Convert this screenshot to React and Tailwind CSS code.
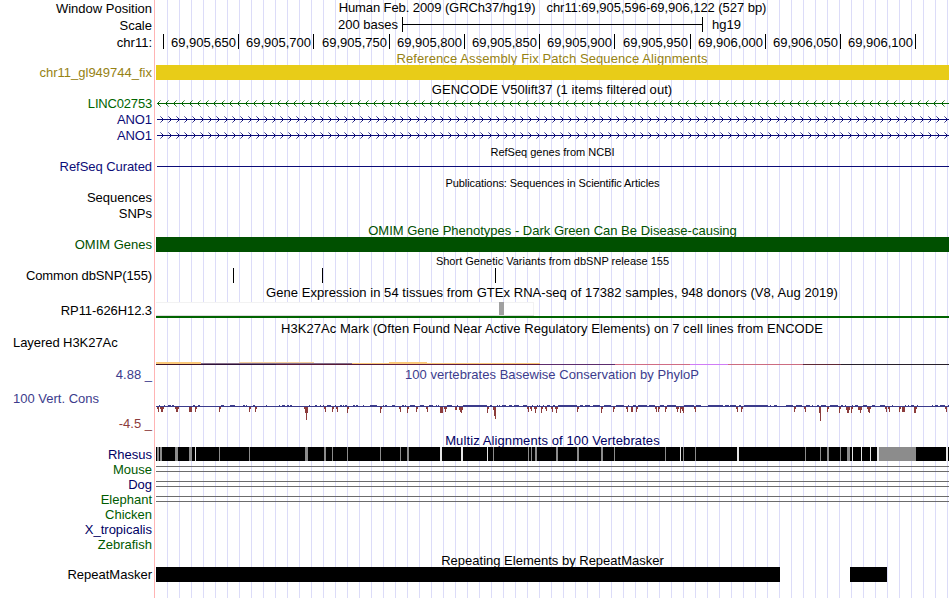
import React from 'react';

// Tracks share one x scale: window pixels 156 to 949
const LEFT = 156;
const WIDTH = 793;

const rulerTicks = [
  { label: '69,905,650', wide: false },
  { label: '69,905,700', wide: false },
  { label: '69,905,750', wide: true },
  { label: '69,905,800', wide: false },
  { label: '69,905,850', wide: false },
  { label: '69,905,900', wide: false },
  { label: '69,905,950', wide: true },
  { label: '69,906,000', wide: false },
  { label: '69,906,050', wide: false },
  { label: '69,906,100', wide: false },
];

// [x, width, height]
const consDrops = [
  [157, 2, 2], [158, 1, 5], [160, 4, 2], [161, 2, 5], [175, 4, 2], [176, 2, 5], [189, 3, 5], [195, 2, 2], [195, 1, 5],
  [219, 2, 2], [219, 1, 5], [249, 2, 2], [249, 1, 5], [255, 2, 2], [255, 1, 5], [304, 4, 2], [305, 3, 6], [306, 1, 13],
  [324, 2, 2], [325, 1, 5], [332, 2, 2], [332, 1, 5], [336, 2, 2], [337, 1, 5], [347, 2, 2], [347, 1, 6], [380, 2, 2],
  [380, 1, 6], [399, 2, 2], [400, 1, 5], [407, 2, 2], [407, 1, 6], [416, 2, 2], [416, 1, 5], [426, 2, 2], [427, 1, 5],
  [440, 3, 6], [444, 3, 2], [445, 1, 5], [455, 2, 3], [459, 4, 3], [461, 1, 6], [460, 2, 5], [487, 2, 2], [487, 1, 6],
  [493, 3, 3], [494, 2, 9], [495, 1, 12], [527, 2, 2], [528, 1, 5], [530, 2, 2], [531, 1, 4], [534, 3, 2], [535, 1, 6],
  [541, 2, 2], [541, 1, 6], [545, 2, 2], [546, 1, 4], [551, 2, 2], [552, 1, 5], [555, 3, 2], [556, 1, 6], [577, 2, 2],
  [577, 1, 5], [601, 2, 2], [601, 1, 6], [613, 2, 2], [613, 1, 5], [626, 2, 2], [627, 1, 5], [631, 2, 5], [636, 2, 2],
  [636, 1, 5], [655, 2, 2], [656, 1, 5], [658, 2, 2], [658, 1, 5], [665, 2, 2], [665, 1, 5], [676, 3, 2], [677, 1, 5],
  [680, 2, 2], [680, 1, 6], [682, 1, 4], [683, 1, 6], [694, 2, 2], [695, 1, 5], [736, 2, 2], [737, 1, 5], [741, 2, 2],
  [741, 1, 5], [794, 2, 2], [794, 1, 5], [804, 2, 2], [805, 1, 5], [819, 2, 6], [820, 1, 14], [827, 2, 2], [827, 1, 5],
  [839, 2, 2], [839, 1, 6], [846, 4, 3], [847, 2, 6], [851, 2, 2], [851, 1, 6], [858, 4, 3], [860, 1, 6], [867, 4, 2],
  [868, 2, 5], [869, 1, 6], [885, 2, 2], [886, 1, 5], [888, 2, 2], [889, 1, 5], [899, 2, 2], [899, 1, 5], [902, 3, 5],
  [914, 3, 2], [914, 2, 6], [945, 2, 2], [946, 1, 5],
];

// [x, width]
const consBumps = [
  [159, 1], [164, 1], [168, 3], [172, 2], [193, 2], [198, 2], [221, 3], [230, 5], [243, 2], [246, 1], [253, 2], [266, 1],
  [279, 1], [282, 3], [287, 2], [290, 2], [309, 1], [315, 2], [320, 1], [323, 1], [327, 4], [335, 1], [340, 2], [343, 1],
  [345, 2], [353, 2], [356, 2], [363, 1], [370, 7], [383, 1], [385, 2], [392, 3], [402, 2], [405, 1], [410, 5], [420, 4],
  [429, 4], [436, 1], [438, 1], [447, 5], [457, 1], [463, 24], [490, 2], [497, 1], [499, 1], [502, 4], [509, 3], [514, 5],
  [523, 4], [532, 1], [537, 1], [539, 1], [543, 1], [547, 3], [553, 2], [558, 19], [580, 3], [585, 5], [593, 7], [604, 7],
  [616, 8], [628, 1], [633, 3], [638, 9], [649, 6], [660, 4], [667, 9], [684, 6], [690, 4], [696, 5], [708, 15], [725, 4],
  [730, 6], [739, 2], [744, 24], [770, 1], [774, 3], [786, 7], [796, 6], [806, 4], [812, 1], [817, 2], [821, 5], [830, 8],
  [841, 2], [845, 1], [852, 1], [855, 3], [863, 4], [872, 3], [880, 5], [892, 1], [905, 1], [908, 1], [911, 3], [917, 1],
  [932, 1], [935, 3], [940, 5], [948, 1],
];

const rhesusGray = [
  [157, 2], [160, 2], [175, 3], [189, 3], [219, 1], [249, 1], [305, 3], [324, 2], [332, 1], [347, 1], [380, 1], [400, 1],
  [407, 2], [493, 1], [528, 1], [531, 1], [535, 2], [556, 2], [577, 2], [601, 2], [614, 1], [665, 1], [683, 1], [695, 1],
  [805, 1], [820, 1], [827, 2], [840, 1], [847, 3], [879, 37],
];

const rhesusLight = [[195, 1], [440, 2], [461, 2], [487, 1], [680, 1], [737, 2], [852, 1], [861, 1], [870, 1], [877, 2], [946, 2]];

// [x, y, width, height, color]
const h3k27ac = [
  [156, 27, 45, 2, '#fac878'],
  [201, 28, 151, 1, '#86708a'],
  [239, 27, 75, 1, '#f4cf9c'],
  [352, 28, 37, 1, '#fac878'],
  [389, 27, 38, 2, '#fac878'],
  [427, 28, 113, 1, '#fac878'],
  [156, 29, 45, 1, '#3c1022'],
  [201, 29, 75, 1, '#2e1038'],
  [276, 29, 113, 1, '#561838'],
  [389, 29, 151, 1, '#601a3c'],
  [540, 29, 75, 1, '#5c2c6c'],
  [615, 29, 75, 1, '#d06c84'],
  [690, 29, 38, 1, '#d07cf6'],
  [728, 29, 75, 1, '#cc6c80'],
  [803, 29, 38, 1, '#602834'],
  [841, 29, 108, 1, '#28202a'],
];

const Plot = ({ height, children }) => (
  <svg
    className="block"
    width={WIDTH}
    height={height}
    viewBox={`${LEFT} 0 ${WIDTH} ${height}`}
    shapeRendering="crispEdges"
  >
    {children}
  </svg>
);

const Row = ({ height, label, labelClass = '', children }) => (
  <div className={`flex ${height}`}>
    <div className={`w-[152px] shrink-0 text-right ${labelClass}`}>{label}</div>
    <div className="ml-1 w-[793px] shrink-0">{children}</div>
  </div>
);

const Title = ({ className = '', children }) => (
  <div className={`text-center ${className}`}>{children}</div>
);

const GeneLine = ({ color, strand }) => {
  const tips = [];
  for (let x = strand === '-' ? 157 : 163; x < 949; x += 8) tips.push(x);
  const dir = strand === '-' ? 1 : -1;
  return (
    <Plot height={16}>
      <rect x={157} y={7} width={792} height={1} fill={color} />
      {tips.map((x) => (
        <g key={x} fill={color}>
          <rect x={x + dir} y={6} width={1} height={3} />
          <rect x={x + dir * 2} y={5} width={1} height={1} opacity={0.8} />
          <rect x={x + dir * 2} y={9} width={1} height={1} opacity={0.8} />
          <rect x={x + dir * 3} y={4} width={1} height={1} opacity={0.5} />
          <rect x={x + dir * 3} y={10} width={1} height={1} opacity={0.5} />
        </g>
      ))}
    </Plot>
  );
};

const AlignRow = ({ name, labelClass, lines }) => (
  <Row height="h-[15px]" label={name} labelClass={labelClass}>
    {lines && (
      <Plot height={15}>
        <rect x={156} y={4} width={793} height={1} fill="#6c6c6c" />
        <rect x={156} y={9} width={793} height={1} fill="#6c6c6c" />
      </Plot>
    )}
  </Row>
);

export default function App() {
  return (
    <div className="flex h-[598px] w-[950px] overflow-hidden bg-white font-['Liberation_Sans',Arial,sans-serif] text-[13px] leading-[15px] whitespace-nowrap text-black">
      <div className="h-[598px] w-[949px] bg-[linear-gradient(90deg,#fff_154px,#ffb4b4_154px,#ffb4b4_155px,#fff_155px,#fff_156px,transparent_156px),repeating-linear-gradient(90deg,#dcdcf8_0px,#dcdcf8_1px,#fff_1px,#fff_12px)] bg-[position:0_0,11px_0]">
        <Row height="h-[17px]" label="Window Position" labelClass="pt-px">
          <div className="flex justify-center gap-[11px]">
            <span className="tracking-[-0.09px]">Human Feb. 2009 (GRCh37/hg19)</span>
            <span className="tracking-[-0.05px]">chr11:69,905,596-69,906,122 (527 bp)</span>
          </div>
        </Row>
        <Row height="h-[17px]" label="Scale" labelClass="pt-px">
          <div className="flex">
            <span className="w-[242px] text-right">200 bases</span>
            <span className="ml-1 flex h-[15px] w-[301px] items-center border-x border-black">
              <span className="h-px w-full bg-black" />
            </span>
            <span className="ml-[9px]">hg19</span>
          </div>
        </Row>
        <Row height="h-4" label="chr11:" labelClass="pt-px">
          <div className="flex">
            <span className="h-[15px] w-2 border-r border-black" />
            {rulerTicks.map((t) => (
              <span
                key={t.label}
                className={`h-[15px] border-r border-black pt-px pr-0.5 text-right ${t.wide ? 'w-[76px]' : 'w-[75px]'}`}
              >
                {t.label}
              </span>
            ))}
          </div>
        </Row>

        <Row height="h-[15px]">
          <Title className="pt-px pr-px tracking-[0.1px] text-[#968214]">Reference Assembly Fix Patch Sequence Alignments</Title>
        </Row>
        <Row height="h-4" label="chr11_gl949744_fix" labelClass="text-[#968214]">
          <div className="relative h-[15px] bg-[#e8cc18]" />
        </Row>

        <Row height="h-[15px]">
          <Title className="pt-px pr-px tracking-[0.05px]">GENCODE V50lift37 (1 items filtered out)</Title>
        </Row>
        <Row height="h-4" label="LINC02753" labelClass="tracking-[-0.18px] text-[#006400]">
          <GeneLine color="#006400" strand="-" />
        </Row>
        <Row height="h-4" label="ANO1" labelClass="tracking-[-0.1px] text-[#0c0c78]">
          <GeneLine color="#0c0c78" strand="+" />
        </Row>
        <Row height="h-4" label="ANO1" labelClass="tracking-[-0.1px] text-[#0c0c78]">
          <GeneLine color="#0c0c78" strand="+" />
        </Row>

        <Row height="h-[15px]">
          <Title className="pt-px text-[11px]">RefSeq genes from NCBI</Title>
        </Row>
        <Row height="h-[15px]" label="RefSeq Curated" labelClass="tracking-[-0.06px] text-[#0c0c78]">
          <Plot height={15}>
            <rect x={157} y={7} width={792} height={1} fill="#0c0c78" />
          </Plot>
        </Row>

        <Row height="h-4">
          <Title className="pt-0.5 text-[11px] tracking-[-0.08px]">Publications: Sequences in Scientific Articles</Title>
        </Row>
        <Row height="h-4" label="Sequences" />
        <Row height="h-4" label="SNPs" />

        <Row height="h-[15px]">
          <Title className="pt-px text-[#005000]">OMIM Gene Phenotypes - Dark Green Can Be Disease-causing</Title>
        </Row>
        <Row height="h-[15px]" label="OMIM Genes" labelClass="text-[#005000]">
          <div className="relative h-[15px] bg-[#005000]" />
        </Row>

        <Row height="h-4">
          <Title className="pt-0.5 text-[11px]">Short Genetic Variants from dbSNP release 155</Title>
        </Row>
        <Row height="h-4" label="Common dbSNP(155)" labelClass="tracking-[-0.11px]">
          <Plot height={15}>
            {[233, 322, 495].map((x) => (
              <rect key={x} x={x} y={0} width={1} height={15} fill="#000" />
            ))}
          </Plot>
        </Row>

        <Row height="h-4">
          <Title className="pt-px pr-px tracking-[0.05px]">
            Gene Expression in 54 tissues from GTEx RNA-seq of 17382 samples, 948 donors (V8, Aug 2019)
          </Title>
        </Row>
        <Row height="h-5" label="RP11-626H12.3" labelClass="pt-[3px] tracking-[-0.08px]">
          <Plot height={20}>
            <rect x={156} y={2} width={378} height={14} fill="#f2f2f2" />
            <rect x={156} y={3} width={377} height={12} fill="#fff" />
            <rect x={156} y={15} width={378} height={1} fill="#dcdcdc" />
            <rect x={499} y={2} width={5} height={13} fill="#a0a0a0" />
            <rect x={156} y={16} width={793} height={2} fill="#006400" />
          </Plot>
        </Row>

        <Row height="h-[15px]">
          <Title className="pt-px pr-px tracking-[0.05px]">
            H3K27Ac Mark (Often Found Near Active Regulatory Elements) on 7 cell lines from ENCODE
          </Title>
        </Row>
        <Row height="h-8" label="Layered H3K27Ac" labelClass="pl-[13px] !text-left tracking-[-0.06px]">
          <Plot height={32}>
            {h3k27ac.map(([x, y, w, h, color]) => (
              <rect key={`${x}-${y}`} x={x} y={y} width={w} height={h} fill={color} />
            ))}
          </Plot>
        </Row>

        <Row height="h-[15px]" label="4.88 _" labelClass="text-[#3c3c8c]">
          <Title className="pr-px tracking-[0.04px] text-[#3c3c8c]">100 vertebrates Basewise Conservation by PhyloP</Title>
        </Row>
        <Row
          height="h-[50px]"
          labelClass="flex flex-col pt-[9px]"
          label={
            <>
              <span className="pl-[13px] text-left text-[#3c3c8c]">100 Vert. Cons</span>
              <span className="mt-2.5 text-[#8c3c3c]">-4.5 _</span>
            </>
          }
        >
          <Plot height={50}>
            <rect x={156} y={24} width={793} height={1} fill="#3c3c8c" />
            {consBumps.map(([x, w]) => (
              <rect key={x} x={x} y={23} width={w} height={1} fill="#3c3c8c" />
            ))}
            {consDrops.map(([x, w, h]) => (
              <rect key={`${x}-${w}`} x={x} y={25} width={w} height={h} fill="#8c3c3c" />
            ))}
          </Plot>
        </Row>

        <Row height="h-[15px]">
          <Title className="pt-px tracking-[0.1px] text-[#000064]">Multiz Alignments of 100 Vertebrates</Title>
        </Row>
        <Row height="h-[15px]" label="Rhesus" labelClass="text-[#000064]">
          <div className="relative">
            <Plot height={14}>
              <rect x={156} y={0} width={793} height={14} fill="#000" />
              {rhesusGray.map(([x, w]) => (
                <rect key={x} x={x} y={0} width={w} height={14} fill="#8c8c8c" />
              ))}
              {rhesusLight.map(([x, w]) => (
                <rect key={x} x={x} y={0} width={w} height={14} fill="#e6e6e6" />
              ))}
            </Plot>
          </div>
        </Row>
        <AlignRow name="Mouse" labelClass="text-[#005a00]" lines />
        <AlignRow name="Dog" labelClass="text-[#000064]" lines />
        <AlignRow name="Elephant" labelClass="text-[#005a00]" lines />
        <AlignRow name="Chicken" labelClass="text-[#005a00]" />
        <AlignRow name="X_tropicalis" labelClass="text-[#000064]" />
        <AlignRow name="Zebrafish" labelClass="text-[#005a00]" />

        <Row height="h-[15px]">
          <Title className="pt-px">Repeating Elements by RepeatMasker</Title>
        </Row>
        <Row height="h-[31px]" label="RepeatMasker">
          <div className="relative">
            <Plot height={15}>
              <rect x={156} y={0} width={624} height={15} fill="#000" />
              <rect x={850} y={0} width={37} height={15} fill="#000" />
            </Plot>
          </div>
        </Row>
      </div>
    </div>
  );
}
